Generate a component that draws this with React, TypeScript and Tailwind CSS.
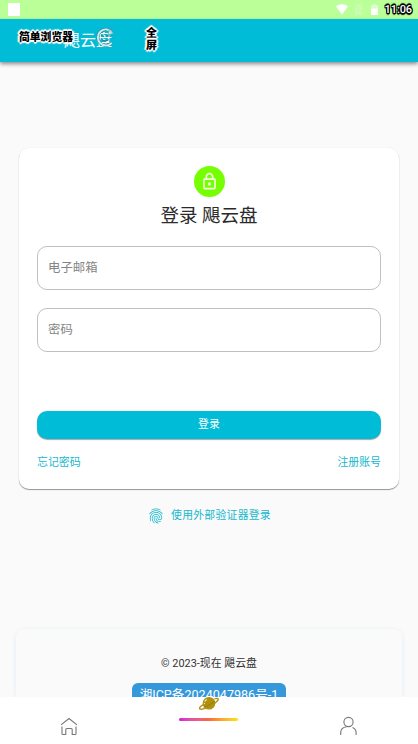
import { MdFingerprint, MdOutlineLock } from 'react-icons/md'

const OUTLINE_WHITE =
  '[text-shadow:1px_0_#fff,-1px_0_#fff,0_1px_#fff,0_-1px_#fff,1px_1px_1px_#fff,-1px_-1px_1px_#fff,2px_0_1px_#fff,-2px_0_1px_#fff,0_2px_1px_#fff,0_-2px_1px_#fff]'
const OUTLINE_BLACK =
  '[text-shadow:1px_0_#000,-1px_0_#000,0_1px_#000,0_-1px_#000,1px_1px_#000,-1px_-1px_#000,1px_-1px_#000,-1px_1px_#000,0_2px_1px_#000,0_-2px_1px_#000]'

function StatusBar() {
  return (
    <div className="flex h-[19px] shrink-0 items-center bg-[#bbff99] pl-2 pr-[6px]">
      <div className="h-[13px] w-3 bg-white" />
      <svg className="ml-auto h-[11px] w-3" viewBox="0 0 12 11" fill="#fff">
        <path d="M0 2.4C3.4-.5 8.6-.5 12 2.4L6 10.6z" />
      </svg>
      <svg className="ml-[7px] h-[11px] w-[7px]" viewBox="0 0 7 11">
        <path d="M2 0h5v11H0V2z" fill="#c9fbb0" />
        <path d="M1 3l5 5" stroke="#bbff99" />
      </svg>
      <svg className="ml-[9px] h-[11px] w-[7px]" viewBox="0 0 7 11">
        <path d="M2 0h3v1h2v4H0V1h2z" fill="#dcfccb" />
        <path d="M0 4.5h7V11H0z" fill="#fff" />
      </svg>
      <span className={`ml-[7px] text-[11px] font-medium leading-none tracking-[-0.1px] text-white ${OUTLINE_BLACK}`}>11:06</span>
    </div>
  )
}

function AppBar() {
  return (
    <header className="relative z-10 flex h-[43px] shrink-0 items-center bg-[#00bcd7] pl-16 shadow-[0_2px_4px_rgba(0,0,0,0.45)]">
      <span className="text-base leading-none text-white">飓云盘</span>

      {/* floating browser controls */}
      <span className={`absolute left-[19px] top-[13px] text-[10.8px] font-black leading-[12px] text-black ${OUTLINE_WHITE}`}>
        简单浏览器
      </span>
      <svg className="absolute left-[96px] top-[9px] h-[19px] w-[19px]" viewBox="0 0 18 18" fill="none">
        <path d="M15.5 4.5A7.6 7.6 0 1 0 15 14" stroke="#3f8791" strokeWidth="3" />
        <path d="M15.5 4.5A7.6 7.6 0 1 0 15 14" stroke="#c5eef3" strokeWidth="1.8" />
        <path d="M12.2 1.6l4.4 3.8-5 .8z" fill="#c5eef3" stroke="#5d9ba4" strokeWidth=".6" />
        <path d="M4.8 7.5h2.4m2.6 0h2.4M5.5 11c2 1.5 4.5 1.5 6.5 0" stroke="#3f7880" strokeWidth="1.1" />
      </svg>
      <span className={`absolute left-[146px] top-[9px] w-[11px] text-[11px] font-black leading-[12px] text-black ${OUTLINE_WHITE}`}>
        全屏
      </span>
    </header>
  )
}

function LoginCard() {
  const inputClass =
    'block h-11 w-full rounded-[10px] border border-[#c0c0c0] bg-white px-2.5 pb-px text-[12.4px] text-gray-800 outline-none placeholder:text-[#858585]'

  return (
    <div className="mx-[19px] mt-[86px] flex h-[341px] shrink-0 flex-col items-center rounded-[10px] bg-white px-[18px] pt-[18px] shadow-[0_1px_1px_rgba(0,0,0,0.4),0_0_2px_rgba(0,0,0,0.05)]">
      <div className="flex h-[31px] w-[31px] shrink-0 items-center justify-center rounded-full bg-[#76ff03] text-[#f4ffe8]">
        <MdOutlineLock size={19} />
      </div>
      <h1 className="mt-[6px] text-[18.5px] leading-[26px] text-[#2a2a2a]">登录 飓云盘</h1>
      <div className="mt-[17px] flex w-full flex-col gap-[18px]">
        <input type="text" placeholder="电子邮箱" className={inputClass} />
        <input type="password" placeholder="密码" className={inputClass} />
      </div>
      <button
        type="button"
        className="mt-[59px] h-7 w-full shrink-0 rounded-[10px] bg-[#00bcd7] text-[10.8px] leading-none tracking-[0.3px] text-white shadow-[0_1px_1px_rgba(0,0,0,0.35)]"
      >
        登录
      </button>
      <div className="mt-4 flex w-full justify-between text-[10.9px] leading-4 text-[#14b8cd]">
        <a href="#">忘记密码</a>
        <a href="#">注册账号</a>
      </div>
    </div>
  )
}

function SiteFooter() {
  return (
    <footer className="mx-4 mt-auto flex h-[68px] shrink-0 flex-col items-center rounded-t-lg bg-[#fafafa] pt-[27px] shadow-[0_1px_5px_#e3ecf6]">
      <p className="text-[10.9px] leading-4 text-[#333]">© 2023-现在 飓云盘</p>
      <div className="mt-[11px] h-[23px] w-[154px] shrink-0 rounded-[6px] bg-[#3498db] text-center text-[12.6px] leading-[23px] text-white">
        湘ICP备2024047986号-1
      </div>
    </footer>
  )
}

function BottomNav() {
  return (
    <nav className="relative z-10 flex h-[47px] shrink-0 justify-between bg-white px-[60px]">
      <svg className="mt-5 h-[19px] w-[18px]" viewBox="0 0 18 19" fill="none" stroke="#777" strokeWidth="1.1" strokeLinejoin="round">
        <path d="M1 7.9 9 1.5l8 6.4M2 9.5v7.2q0 .8.8.8h3v-5q0-1 1-1h4.4q1 0 1 1v5h3q.8 0 .8-.8V9.5" />
      </svg>
      <div className="absolute left-[179px] top-0 flex w-[59px] flex-col items-center">
        <svg className="-mt-px h-4 w-5" viewBox="0 0 20 16">
          <circle cx="10" cy="7.3" r="6.3" fill="#b2900f" />
          <path d="M4.2 8.6C1.2 10.6-.1 12 .8 12.9c1.2 1 6.7-.6 11.7-3.6C17 6.5 20 3.9 19.1 2.8c-.5-.6-1.9-.4-3.7.1" fill="none" stroke="#b2900f" strokeWidth="1.4" />
          <path d="M4.6 11.2c3-.6 7.8-3 10.9-5.9" fill="none" stroke="#8f740c" strokeWidth=".8" />
          <path d="M5.8 5.6c.4-1 1-1.7 2-2.2M5.2 8l.4-.9" fill="none" stroke="#f7efc8" strokeWidth="1.1" />
        </svg>
        <div className="mt-[6px] h-[2.5px] w-full rounded-full bg-linear-to-r from-[#d61bdc] via-[#f66b3c] to-[#f8e60a]" />
      </div>
      <svg className="mt-[19px] h-[20px] w-[19px]" viewBox="0 0 19 20" fill="none" stroke="#777" strokeWidth="1.1">
        <circle cx="9.5" cy="6" r="4.6" />
        <path d="M1.7 19v-2.3c0-3 2.2-5.6 6-6M13.5 11.6c2.3 1 3.6 2.8 3.6 5.1V19" />
      </svg>
    </nav>
  )
}

export default function App() {
  return (
    <div className="flex h-screen w-full flex-col overflow-hidden bg-[#fafafa] font-[Roboto,'Noto_Sans_CJK_SC',sans-serif]">
      <StatusBar />
      <AppBar />
      <main className="flex min-h-0 flex-1 flex-col overflow-hidden">
        <LoginCard />
        <a href="#" className="mt-[17px] flex h-5 items-center justify-center gap-[6px] text-[10.8px] leading-none tracking-[0.3px] text-[#14b8cd]">
          <MdFingerprint size={18} />
          使用外部验证器登录
        </a>
        <SiteFooter />
      </main>
      <BottomNav />
    </div>
  )
}
